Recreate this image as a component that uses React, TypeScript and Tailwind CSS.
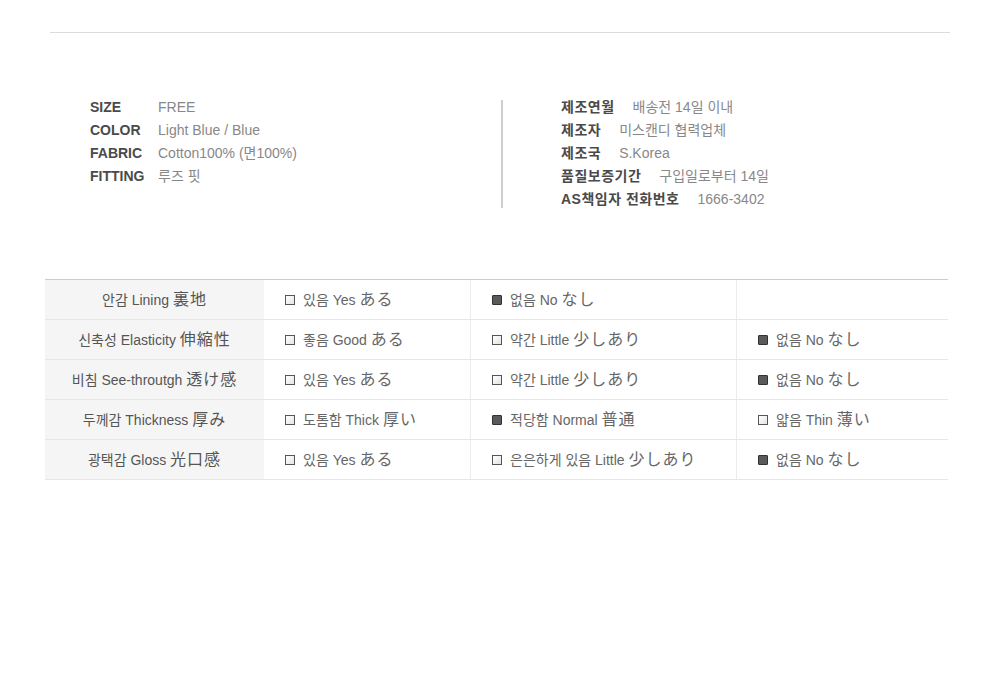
import React from 'react';

const font = { fontFamily: '"Liberation Sans", "Noto Sans CJK KR", sans-serif' };

const leftInfo = [
  ['SIZE', 'FREE'],
  ['COLOR', 'Light Blue / Blue'],
  ['FABRIC', 'Cotton100% (면100%)'],
  ['FITTING', '루즈 핏'],
];

const rightInfo = [
  ['제조연월', '배송전 14일 이내'],
  ['제조자', '미스캔디 협력업체'],
  ['제조국', 'S.Korea'],
  ['품질보증기간', '구입일로부터 14일'],
  ['AS책임자 전화번호', '1666-3402'],
];

type Opt = { label: string; on?: boolean } | null;

const rows: { title: string; opts: Opt[] }[] = [
  { title: '안감 Lining 裏地', opts: [{ label: '있음 Yes ある' }, { label: '없음 No なし', on: true }, null] },
  { title: '신축성 Elasticity 伸縮性', opts: [{ label: '좋음 Good ある' }, { label: '약간 Little 少しあり' }, { label: '없음 No なし', on: true }] },
  { title: '비침 See-throutgh 透け感', opts: [{ label: '있음 Yes ある' }, { label: '약간 Little 少しあり' }, { label: '없음 No なし', on: true }] },
  { title: '두께감 Thickness 厚み', opts: [{ label: '도톰함 Thick 厚い' }, { label: '적당함 Normal 普通', on: true }, { label: '얇음 Thin 薄い' }] },
  { title: '광택감 Gloss 光口感', opts: [{ label: '있음 Yes ある' }, { label: '은은하게 있음 Little 少しあり' }, { label: '없음 No なし', on: true }] },
];

// japanese parts are drawn a bit bigger, like in the original bitmap font
const Mixed = ({ text, className }: { text: string; className?: string }) => (
  <span className={className}>
    {text.split(/([\u3040-\u30ff\u4e00-\u9fff]+)/).map((part, i) =>
      i % 2 === 1 ? (
        <span key={i} className="text-[16px] tracking-[1px]" style={{ fontFamily: '"Noto Sans CJK JP", sans-serif' }}>
          {part}
        </span>
      ) : (
        <span key={i}>{part}</span>
      )
    )}
  </span>
);

const Box = ({ on }: { on?: boolean }) =>
  on ? (
    <span className="inline-block w-[10px] h-[10px] bg-[#5a5a5a] border border-[#333] rounded-[1px] shrink-0" />
  ) : (
    <span className="inline-block w-[10px] h-[10px] bg-gradient-to-br from-white to-[#e4e4e4] border border-[#555] shrink-0" />
  );

const Cell = ({ opt, w, last }: { opt: Opt; w: string; last?: boolean }) => (
  <div className={`${w} flex items-center ${last ? '' : 'border-r border-[#ececec]'} pl-[21px] gap-[8px]`}>
    {opt && (
      <>
        <Box on={opt.on} />
        <span className="text-[14px] text-[#666] leading-none -mt-[2px]">
          <Mixed text={opt.label} />
        </span>
      </>
    )}
  </div>
);

export default function App() {
  return (
    <div className="w-[1000px] h-[690px] bg-white pt-8" style={font}>
      <div className="mx-[50px] h-px bg-[#dcdcdc]" />

      <div className="flex mt-[63px] ml-[90px]">
        <div className="w-[411px] flex flex-col">
          {leftInfo.map(([k, v]) => (
            <div key={k} className="h-[23px] flex items-center">
              <span className="w-[68px] text-[14px] font-bold text-[#4a4a4a]">{k}</span>
              <span className="text-[14px] text-[#888]">{v}</span>
            </div>
          ))}
        </div>
        <div className="w-[2px] h-[108px] mt-[4px] bg-[#cfcfcf]" />
        <div className="pl-[58px] flex flex-col">
          {rightInfo.map(([k, v]) => (
            <div key={k} className="h-[23px] flex items-center">
              <span className="text-[14px] font-bold text-[#4a4a4a] tracking-[0.5px]">{k}</span>
              <span className="ml-[18px] text-[14px] text-[#888]">{v}</span>
            </div>
          ))}
        </div>
      </div>

      <div className="ml-[45px] w-[903px] mt-[68px] border-t border-[#cccccc]">
        {rows.map((r) => (
          <div key={r.title} className="flex h-[40px] border-b border-[#e6e6e6]">
            <div className="w-[219px] bg-[#f5f5f5] flex items-center justify-center text-[14px] text-[#555] leading-none">
              <Mixed text={r.title} className="-mt-[2px]" />
            </div>
            <Cell opt={r.opts[0]} w="w-[207px]" />
            <Cell opt={r.opts[1]} w="w-[266px]" />
            <Cell opt={r.opts[2]} w="flex-1" last />
          </div>
        ))}
      </div>
    </div>
  );
}
